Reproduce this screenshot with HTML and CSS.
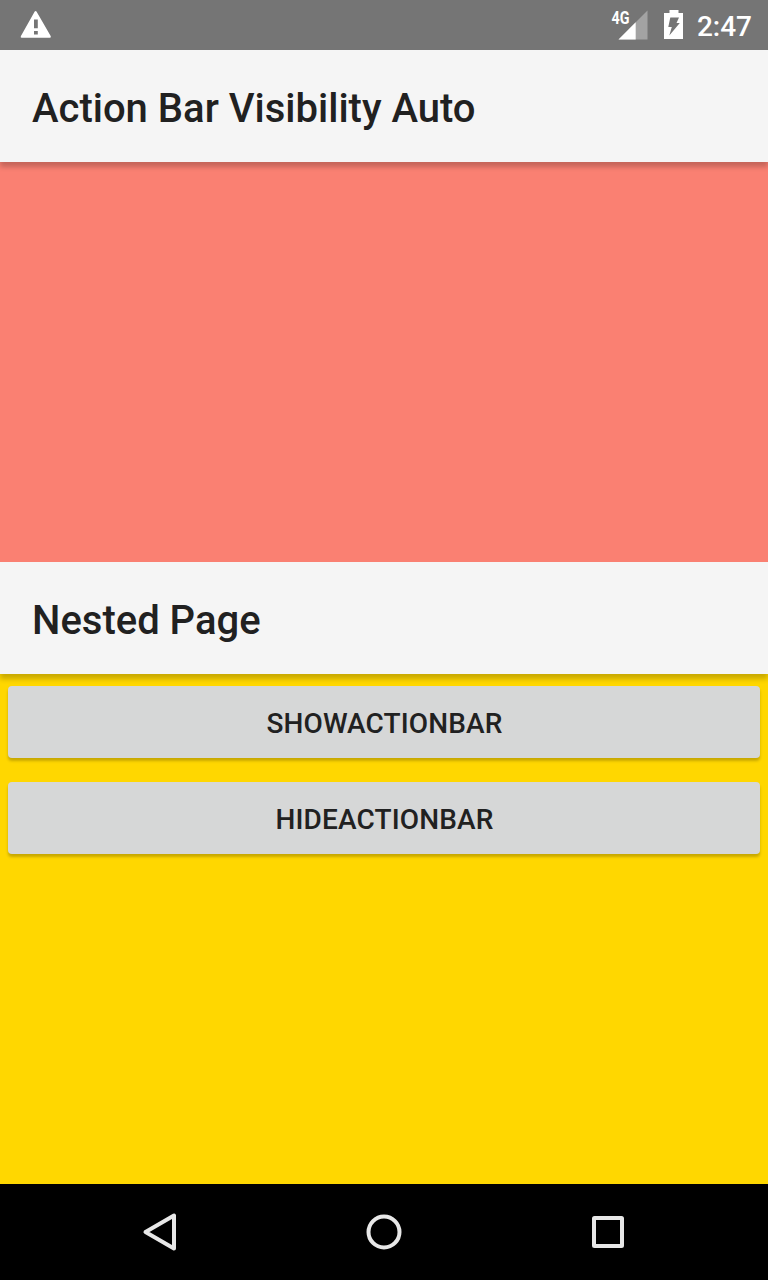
FILE: index.html
```html
<!DOCTYPE html>
<html lang="en">
<head>
<meta charset="utf-8">
<title>Action Bar Visibility Auto</title>
<link rel="stylesheet" href="styles.css">
</head>
<body>
<div class="screen">
  <header class="status">
    <svg class="warning" width="32" height="30" viewBox="0 0 32 30"><path fill="#fff" fill-rule="evenodd" d="M14.700 1.500q.9-1.200 1.800 0L30.800 26.300q.3 1.500-1 1.500H1.800q-1.500 0-1-1.500ZM14 9.500v8.800h3.800V9.500Zm0 11.500v3.500h3.800V21Z"/></svg>
    <div class="status-end">
      <svg class="signal" width="37" height="32" viewBox="0 0 37 32">
        <path fill="#a3a3a3" d="M36.500 1.500v29h-29Z"/><path fill="#fff" d="M24.700 13.300v17.200H7.500Z"/>
        <text class="network" x="0.500" y="14.500" textLength="18" lengthAdjust="spacingAndGlyphs">4G</text>
      </svg>
      <svg class="battery" width="20" height="30" viewBox="0 0 20 30"><path fill="#fff" d="M5.500 0h9v3H19v26H0V3h5.500Z"/><path fill="#757575" d="M6.300 7.500H15L12.500 13h3.300L5.300 25.500l2.500-8.500H4.300Z"/></svg>
      <span class="clock">2:47</span>
    </div>
  </header>
  <div class="bar"><h1 class="title">Action Bar Visibility Auto</h1></div>
  <div class="outer-page"></div>
  <div class="bar"><h2 class="title">Nested Page</h2></div>
  <main class="nested-page">
    <button class="button">SHOWACTIONBAR</button>
    <button class="button">HIDEACTIONBAR</button>
  </main>
  <nav class="nav">
    <svg width="48" height="48" viewBox="0 0 48 48"><path class="stroke" d="M38 7.500v33L9.500 24Z"/></svg>
    <svg width="48" height="48" viewBox="0 0 48 48"><circle class="stroke" cx="24" cy="24" r="15.500"/></svg>
    <svg width="48" height="48" viewBox="0 0 48 48"><rect class="stroke" x="10" y="10" width="28" height="28" rx=".5"/></svg>
  </nav>
</div>
</body>
</html>
```
FILE: styles.css
```css
body {
  margin: 0;
  background: #fff;
  font-family: Roboto, sans-serif;
}
.screen {
  display: flex;
  flex-direction: column;
  width: 768px;
  height: 1280px;
  overflow: hidden;
}
.status {
  display: flex;
  justify-content: space-between;
  box-sizing: border-box;
  height: 50px;
  padding: 10px 16px 0 20px;
  background: #757575;
}
.status-end { display: flex; }
.signal { margin: -1px 16px 0 0; }
.battery { margin-right: 13px; }
.network {
  font: bold 17.5px Roboto, sans-serif;
  fill: #fff;
}
.clock {
  color: #fff;
  font-size: 28px;
  font-weight: 500;
  line-height: 33px;
}
.bar {
  display: flex;
  align-items: center;
  box-sizing: border-box;
  height: 112px;
  padding: 6px 32px 0;
  background: #f5f5f5;
  box-shadow: 0 5px 5px rgba(0, 0, 0, .21);
  z-index: 1;
}
.title {
  margin: 0;
  color: #212121;
  font-size: 40px;
  font-weight: 500;
  line-height: 48px;
}
.outer-page {
  height: 400px;
  background: #fa8072;
}
.nested-page {
  display: flex;
  flex: 1;
  flex-direction: column;
  gap: 24px;
  padding: 12px 8px;
  background: #ffd700;
}
.button {
  height: 72px;
  padding: 2px 0 0;
  border: 0;
  border-radius: 4px;
  background: #d6d7d7;
  color: #212121;
  font: 500 28px Roboto, sans-serif;
  letter-spacing: .13px;
  text-indent: 1px;
  box-shadow: 0 3px 3px rgba(0, 0, 0, .22);
}
.nav {
  display: flex;
  align-items: center;
  justify-content: center;
  gap: 176px;
  height: 96px;
  background: #000;
}
.stroke {
  fill: none;
  stroke: #e8e8e8;
  stroke-width: 4;
  stroke-linejoin: round;
}
```
